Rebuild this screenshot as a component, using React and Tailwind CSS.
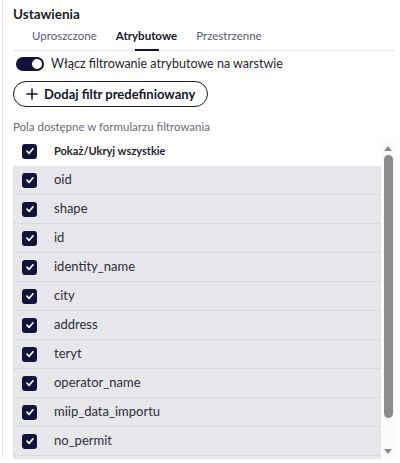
import React, { useState } from "react";

const FIELDS = [
  "oid",
  "shape",
  "id",
  "identity_name",
  "city",
  "address",
  "teryt",
  "operator_name",
  "miip_data_importu",
  "no_permit",
];

function Check() {
  return (
    <span className="flex h-[15px] w-[15px] shrink-0 items-center justify-center rounded-[3px] bg-[#13133a]">
      <svg width="10" height="10" viewBox="0 0 10 10" fill="none">
        <path d="M2 5.2 L4.2 7.3 L8 2.8" stroke="white" strokeWidth="1.7" strokeLinecap="round" strokeLinejoin="round" />
      </svg>
    </span>
  );
}

export default function App() {
  const [on, setOn] = useState(true);
  const tabs = ["Uproszczone", "Atrybutowe", "Przestrzenne"];

  return (
    <div className="h-[463px] w-[400px] overflow-hidden bg-white font-['Lato',sans-serif] text-[#1b1b2f]">
      <div className="ml-[2px] h-[458px] border-l border-[#e3e5ea] pl-[10px] pr-[5px]">
        <div className="pt-[5px] text-[13.5px] font-bold leading-[18px] text-[#1c1c28]">Ustawienia</div>

        {/* tabs */}
        <div className="mt-[5px] flex border-b border-[#e8e9ee] pl-[19px]">
          {tabs.map((t, i) => (
            <div
              key={t}
              className={
                "relative mr-[19px] pb-[6px] text-[11.5px] leading-[16px] " +
                (i === 1 ? "font-bold text-[#16162a]" : "text-[#5b5b6e]")
              }
            >
              {t}
              {i === 1 && (
                <span className="absolute bottom-[-1px] left-1/2 h-[2px] w-[24px] -translate-x-1/2 bg-[#13133a]" />
              )}
            </div>
          ))}
        </div>

        {/* toggle */}
        <div className="mt-[5px] flex items-center gap-[7px] pl-[3px]">
          <button
            onClick={() => setOn(!on)}
            className="flex h-[14px] w-[28px] items-center rounded-full bg-[#13133a] px-[2px]"
          >
            <span className={"h-[10px] w-[10px] rounded-full bg-white " + (on ? "ml-auto" : "")} />
          </button>
          <span className="text-[12.5px] leading-[16px] text-[#1f1f2e]">Włącz filtrowanie atrybutowe na warstwie</span>
        </div>

        {/* button */}
        <button className="mt-[9px] flex h-[26px] items-center gap-[6px] rounded-full border border-[#1b1b2f] pl-[12px] pr-[12px] text-[13px] font-bold leading-[16px] text-[#15152a]">
          <svg width="12" height="12" viewBox="0 0 12 12" fill="none">
            <path d="M6 1 V11 M1 6 H11" stroke="#15152a" strokeWidth="1.5" strokeLinecap="round" />
          </svg>
          Dodaj filtr predefiniowany
        </button>

        <div className="mt-[13px] text-[11.5px] leading-[14px] text-[#6b6b7b]">Pola dostępne w formularzu filtrowania</div>

        {/* list */}
        <div className="mt-[7px] flex h-[318px]">
          <div className="flex-1 overflow-hidden">
            <div className="flex h-[25px] items-center gap-[17px] bg-white pb-[5px] pl-[9px]">
              <Check />
              <span className="text-[11px] font-bold text-[#1f1f2e]">Pokaż/Ukryj wszystkie</span>
            </div>
            {FIELDS.map((f) => (
              <div
                key={f}
                className="flex h-[29px] items-center gap-[17px] border-b border-[#d9d9e0] bg-[#e6e6eb] pl-[9px]"
              >
                <Check />
                <span className="text-[13px] text-[#2e2e3a]">{f}</span>
              </div>
            ))}
            <div className="h-[8px] bg-[#e6e6eb]" />
          </div>
          {/* scrollbar */}
          <div className="flex w-[14px] flex-col items-center bg-[#fbfbfc] pt-[4px] pb-[4px]">
            <svg width="8" height="6" viewBox="0 0 8 6">
              <path d="M0 6 L4 1 L8 6 Z" fill="#8d8d8d" />
            </svg>
            <div className="mt-[4px] h-[263px] w-[9px] rounded-full bg-[#8c8c8c]" />
            <div className="flex-1" />
            <svg width="8" height="6" viewBox="0 0 8 6">
              <path d="M0 0 L4 5 L8 0 Z" fill="#8d8d8d" />
            </svg>
          </div>
        </div>
      </div>
    </div>
  );
}
